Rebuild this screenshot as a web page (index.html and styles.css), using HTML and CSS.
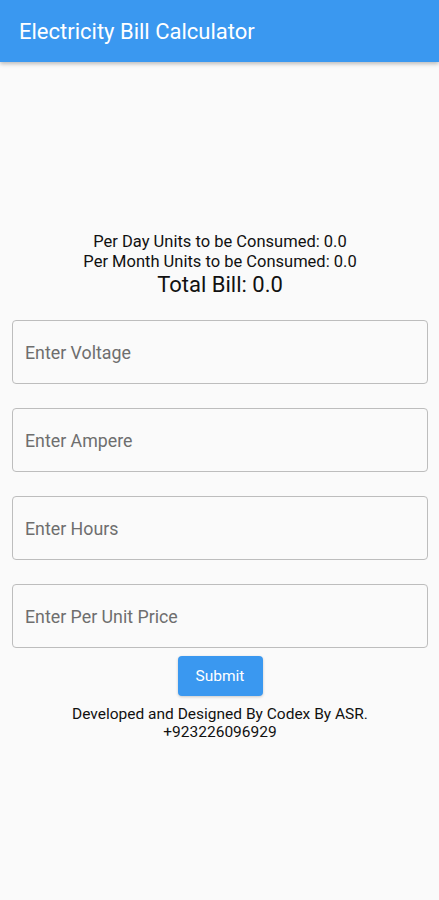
FILE: index.html
```html
<!DOCTYPE html>
<html lang="en">
<head>
    <meta charset="UTF-8">
    <meta name="viewport" content="width=device-width, initial-scale=1.0">
    <title>Electricity Bill Calculator</title>
    <link rel="stylesheet" href="styles.css">
</head>
<body>
    <header class="app-bar">
        <h1>Electricity Bill Calculator</h1>
    </header>
    <main class="content">
        <section class="results">
            <p>Per Day Units to be Consumed: 0.0</p>
            <p>Per Month Units to be Consumed: 0.0</p>
            <p class="total">Total Bill: 0.0</p>
        </section>
        <form class="fields">
            <input type="text" placeholder="Enter Voltage">
            <input type="text" placeholder="Enter Ampere">
            <input type="text" placeholder="Enter Hours">
            <input type="text" placeholder="Enter Per Unit Price">
        </form>
        <button type="button" class="btn">Submit</button>
        <footer class="credits">
            <p>Developed and Designed By Codex By ASR.</p>
            <p>+923226096929</p>
        </footer>
    </main>
</body>
</html>
```

FILE: styles.css
```css
* {
    margin: 0;
    padding: 0;
    box-sizing: border-box;
}
body {
    font-family: Roboto, 'Noto Sans', sans-serif;
    background-color: #FAFAFA;
    color: #111111;
    width: 439px;
    height: 900px;
    overflow: hidden;
}
.app-bar {
    height: 62px;
    background-color: #3A98F0;
    display: flex;
    align-items: center;
    padding: 1px 19px 0;
    box-shadow: 0 2px 4px rgba(0, 0, 0, 0.25);
}
.app-bar h1 {
    font-size: 22px;
    font-weight: 400;
    color: #FFFFFF;
}
.content {
    display: flex;
    flex-direction: column;
    align-items: center;
    padding: 170px 11px 0 12px;
}
.results {
    text-align: center;
}
.results p {
    font-size: 16.5px;
    line-height: 20px;
}
.results .total {
    font-size: 22px;
    line-height: 26px;
}
.fields {
    width: 100%;
    display: flex;
    flex-direction: column;
    gap: 24px;
    margin-top: 22px;
}
.fields input {
    height: 64px;
    width: 100%;
    border: 1px solid #BDBDBD;
    border-radius: 4px;
    background: transparent;
    padding: 0 12px;
    font-family: Roboto, 'Noto Sans', sans-serif;
    font-size: 17.8px;
    color: #222222;
}
.fields input::placeholder {
    color: #6E6E6E;
}
.btn {
    margin-top: 8px;
    width: 85px;
    height: 40px;
    border: none;
    border-radius: 4px;
    background-color: #3A98F0;
    color: #FFFFFF;
    font-family: Roboto, 'Noto Sans', sans-serif;
    font-size: 15.5px;
    box-shadow: 0 1px 3px rgba(0, 0, 0, 0.2);
}
.credits {
    margin-top: 10px;
    text-align: center;
}
.credits p {
    font-size: 15.5px;
    line-height: 17.5px;
}
```
